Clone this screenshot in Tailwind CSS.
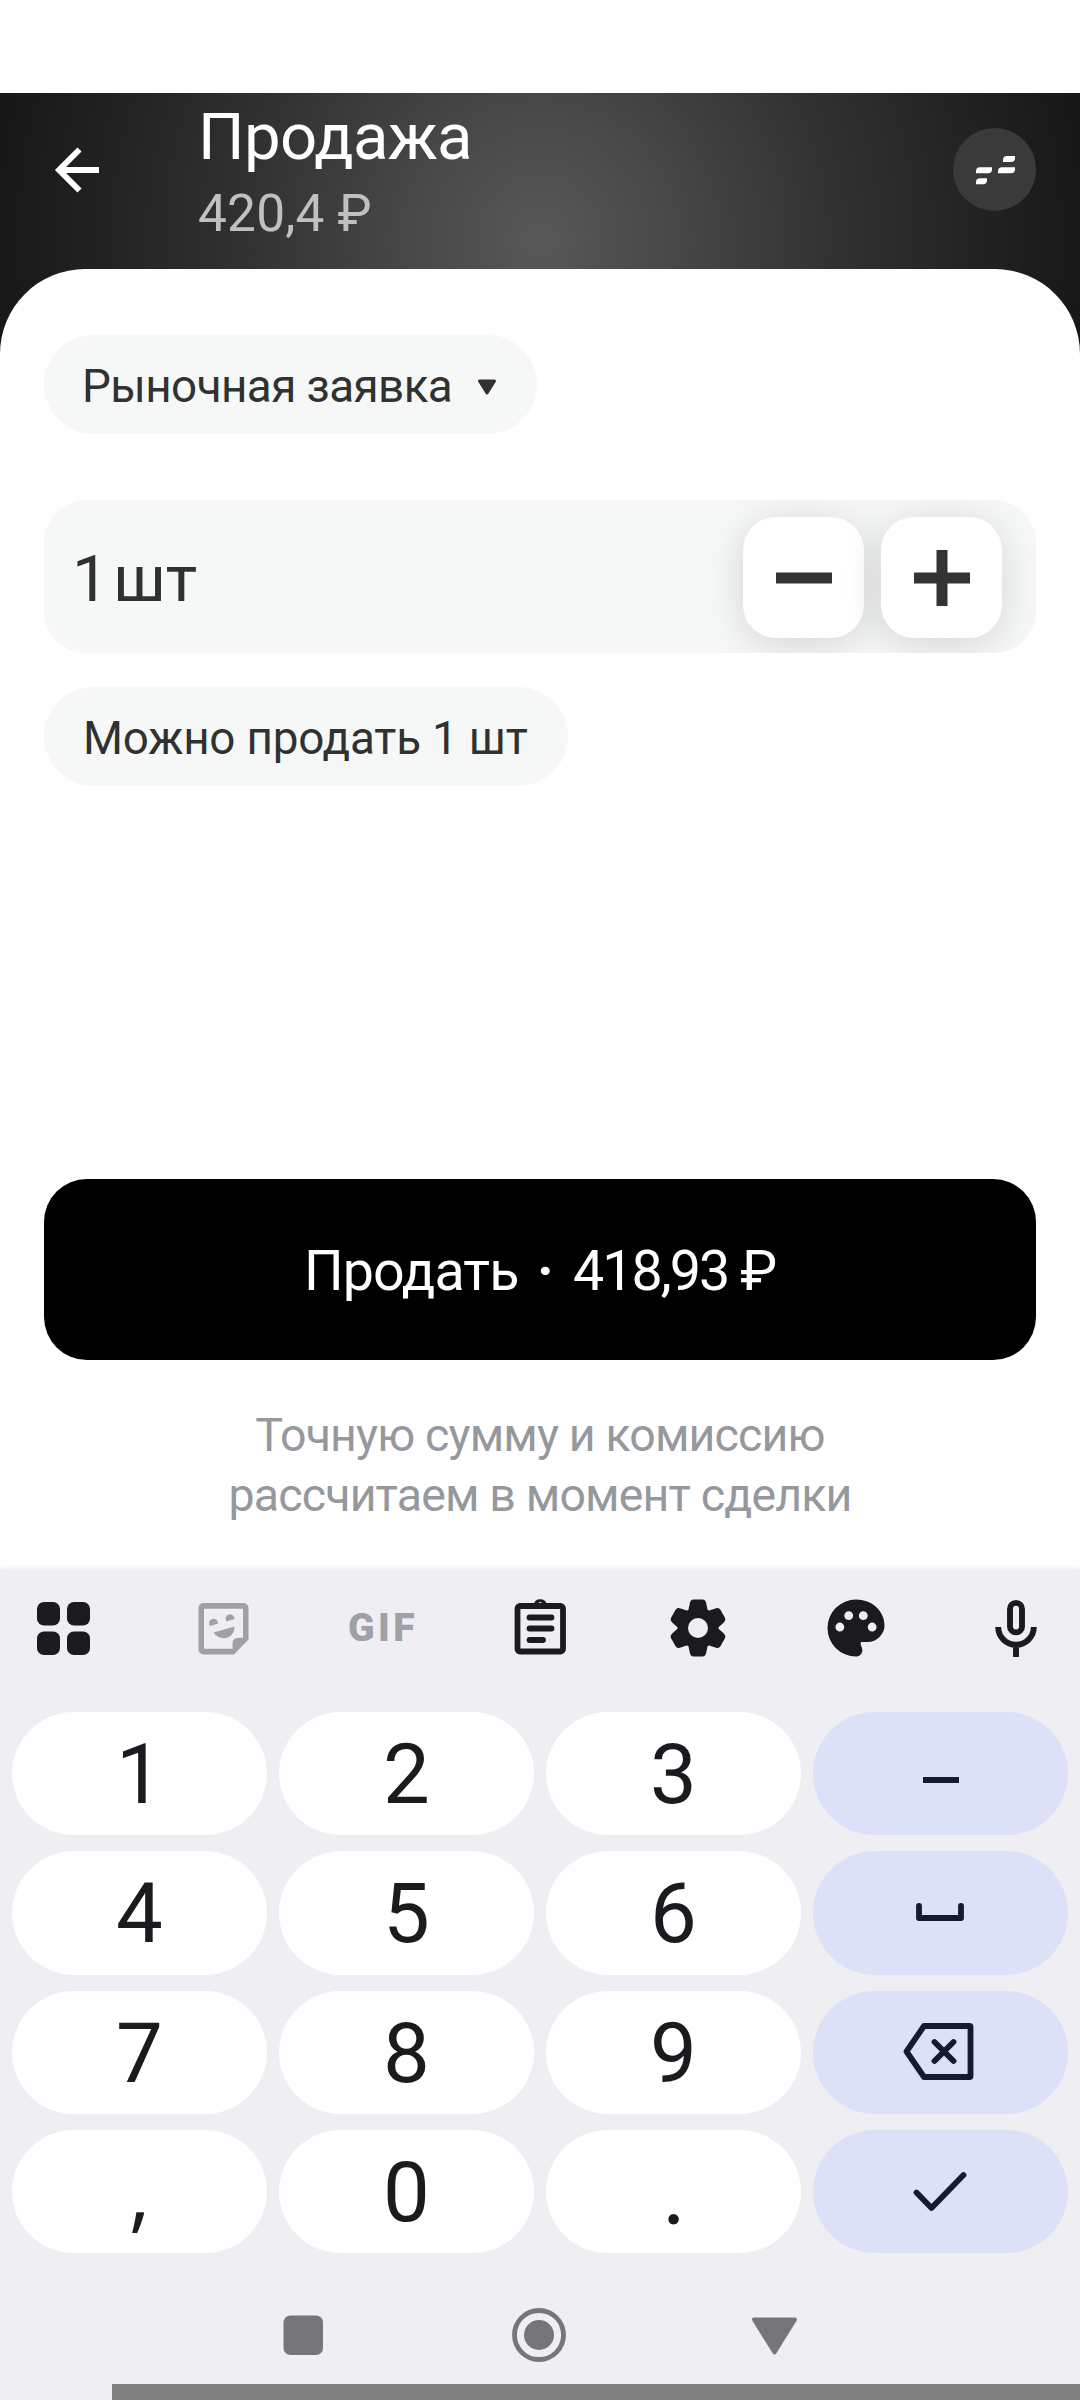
<!DOCTYPE html>
<html lang="ru">
<head>
<meta charset="utf-8">
<title>Продажа</title>
<script src="https://cdn.jsdelivr.net/npm/@tailwindcss/browser@4"></script>
</head>
<body class="w-[1080px] h-[2400px] overflow-hidden bg-white flex flex-col font-['Roboto',sans-serif] text-[#303231] whitespace-nowrap">

<!-- Header and order sheet -->
<main class="mt-[93px] h-[1476px] shrink-0 flex flex-col bg-[radial-gradient(circle_at_540px_145px,#585858_0px,#484848_130px,#323232_290px,#232323_430px,#161616_560px)]">
  <header class="h-[176px] shrink-0 flex items-start">
    <svg class="ml-[52px] mt-[52px] w-[50px] h-[50px]" viewBox="0 0 50 50" fill="none" stroke="#fff" stroke-width="5.8"><path d="M47 25H7M27.500 4.500L7 25l20.500 20.500"/></svg>
    <div class="ml-[96px] mt-[11px] flex-1">
      <h1 class="text-[65.3px] leading-[66px] tracking-[-0.67px] text-white">Продажа</h1>
      <p class="mt-[14px] text-[51.4px] leading-[60px] tracking-[0.2px] text-[#c0c0c0]">420,4 ₽</p>
    </div>
    <div class="mt-[35px] mr-[44px] w-[83px] h-[83px] rounded-full bg-[#3a3a3a]">
      <svg class="w-[83px] h-[83px]" viewBox="0 0 83 83" fill="#fff"><path d="M54 28h8v2q0 4-4 4h-8v-2q0-4 4-4zM27 39.200h12v2q0 4-4 4H23v-2q0-4 4-4zM49 39.200h13v2q0 4-4 4H45v-2q0-4 4-4zM27 50.200h7v2q0 4-4 4h-7v-2q0-4 4-4z"/></svg>
    </div>
  </header>

  <section class="flex-1 bg-white rounded-t-[85px] px-[44px] pt-[66px] flex flex-col items-start">
    <div class="h-[99px] w-[493px] rounded-full bg-[#f6f8f7] flex items-center pl-[38px] pr-[40px] justify-between">
      <span class="pt-[4px] text-[45.8px] leading-[56px] tracking-[-0.58px]">Рыночная заявка</span>
      <svg class="w-[20px] h-[18px] mt-[4px]" viewBox="0 0 20 18" fill="#303231" stroke="#303231" stroke-width="3" stroke-linejoin="round"><path d="M2.500 3h15L10 15z"/></svg>
    </div>

    <div class="mt-[66px] w-full h-[153px] rounded-[42px] bg-[#f6f8f7] overflow-hidden flex items-center pl-[32px] pr-[34px]">
      <div class="flex-1 pt-[4px] flex text-[65.3px] leading-[76px]"><span class="-ml-[4px] w-[41px]">1</span><span>шт</span></div>
      <div class="flex gap-[17px]">
        <button class="w-[121px] h-[121px] rounded-[33px] bg-white shadow-[0_6px_40px_rgba(0,0,0,0.14)] flex items-center justify-center mt-[2px]">
          <svg class="w-[56px] h-[56px]" viewBox="0 0 56 56" fill="#333"><path d="M0 22.500h56v11H0z"/></svg>
        </button>
        <button class="w-[121px] h-[121px] rounded-[33px] bg-white shadow-[0_6px_40px_rgba(0,0,0,0.14)] flex items-center justify-center mt-[2px]">
          <svg class="w-[56px] h-[56px]" viewBox="0 0 56 56" fill="#333"><path d="M0 22.500h56v11H0zM22.500 0h11v56h-11z"/></svg>
        </button>
      </div>
    </div>

    <div class="mt-[34px] h-[99px] w-[524px] rounded-full bg-[#f6f8f7] flex items-center pl-[39px]">
      <span class="pt-[4px] text-[45.8px] leading-[56px] tracking-[-0.19px]">Можно продать 1 шт</span>
    </div>

    <button class="mt-[393px] w-full h-[181px] rounded-[43px] bg-black text-white text-left text-[55.6px] leading-[66px] flex items-center pt-[3px] pl-[260px]">
      <span class="w-[226px] tracking-[-0.93px]">Продать</span>
      <span class="w-[43px] pl-[7px] font-bold">·</span>
      <span class="tracking-[-1.97px]">418,93 ₽</span>
    </button>

    <p class="mt-[45px] w-full text-center text-[46.5px] leading-[60px] tracking-[-0.85px] text-[#95989d]">Точную сумму и комиссию<br>рассчитаем в момент сделки</p>
  </section>
</main>

<!-- Keyboard -->
<section class="relative flex-1 bg-[#eeeef3] shadow-[0_-1px_4px_rgba(0,0,0,0.08)] flex flex-col text-[#1b1b1f]">
  <div class="h-[143px] shrink-0 pt-[21px] pl-[25px] flex gap-[82px] *:shrink-0">
    <svg class="w-[76px] h-[76px]" viewBox="0 0 76 76" fill="#1b1b1f"><rect x="12" y="12" width="23" height="23.500" rx="7"/><rect x="42" y="12" width="23" height="23.500" rx="7"/><rect x="12" y="41.500" width="23" height="23.500" rx="7"/><rect x="42" y="41.500" width="23" height="23.500" rx="7"/></svg>
    <svg class="w-[76px] h-[76px] ml-[2.5px]" viewBox="0 0 76 76" fill="#a0a0a5"><path fill-rule="evenodd" d="M17.500 13h40a5 5 0 0 1 5 5v31.500L48 64.500H17.500a5 5 0 0 1-5-5V18a5 5 0 0 1 5-5zm.5 5.800v40h28.500v-5q0-6 6-6h4.500v-29z"/><path d="M24 36a4.500 4.500 0 1 1 8-2.500zM40.500 31.500a4.500 4.500 0 1 1 8-2.500zM27.500 42.500l21-6c0 13.500-15.500 15-21 6z"/></svg>
    <span class="w-[76px] h-[76px] flex items-center justify-center text-[39px] font-black tracking-[3.500px] pl-[3px] text-[#a0a0a5]">GIF</span>
    <svg class="w-[76px] h-[76px]" viewBox="0 0 76 76" fill="none" stroke="#1b1b1f" stroke-width="5.800"><rect x="15.500" y="16" width="45.500" height="45.500" rx="2.500"/><path stroke-linecap="round" d="M27.500 27.500h22M27.500 38.500h22M27.500 50h13.500"/><path fill="#1b1b1f" stroke="none" fill-rule="evenodd" d="M29 14.500h2.500a7 7 0 0 1 13.500 0h2.500v3H29zM38.200 12a2 2 0 1 0 .1 0z"/></svg>
    <svg class="w-[76px] h-[76px]" viewBox="-38 -38 76 76"><g fill="#1b1b1f"><circle r="20.500"/><g id="tooth"><path d="M-10-16L-8-25.500Q-7.200-28.500-4.500-28.500H4.500Q7.200-28.500 8-25.500L10-16z"/></g><use href="#tooth" transform="rotate(60)"/><use href="#tooth" transform="rotate(120)"/><use href="#tooth" transform="rotate(180)"/><use href="#tooth" transform="rotate(240)"/><use href="#tooth" transform="rotate(300)"/></g><circle r="10" fill="#eeeef3"/></svg>
    <svg class="w-[76px] h-[76px]" viewBox="0 0 24 24" fill="#1b1b1f"><path d="M12 3a9 9 0 0 0 0 18c1.100 0 2-.9 2-2 0-1-.55-1.300-.55-2.200 0-.3.2-.4.550-.4h1.700a5.300 5.300 0 0 0 5.300-5.300C21 6.600 17 3 12 3zM6.900 13.100a1.400 1.400 0 1 1 0-2.800 1.400 1.400 0 0 1 0 2.800zm2.800-3.600a1.400 1.400 0 1 1 0-2.800 1.400 1.400 0 0 1 0 2.800zm4.600 0a1.400 1.400 0 1 1 0-2.800 1.400 1.400 0 0 1 0 2.800zm2.800 3.600a1.400 1.400 0 1 1 0-2.800 1.400 1.400 0 0 1 0 2.800z"/></svg>
    <svg class="w-[76px] h-[76px] ml-[2.5px]" viewBox="0 0 76 76" fill="none" stroke="#1b1b1f" stroke-width="5.900"><rect x="32" y="12.900" width="12" height="29.500" rx="6"/><path d="M20.200 37a17.800 17.800 0 0 0 35.600 0M38 54v13"/></svg>
  </div>

  <div class="grid grid-cols-4 grid-rows-4 gap-x-[12px] gap-y-[16px] px-[12px] h-[541px] shrink-0 text-[83.300px] *:rounded-[62px] *:flex *:items-center *:justify-center *:leading-[100px]">
    <div class="bg-white pt-[3px]">1</div>
    <div class="bg-white pt-[3px]">2</div>
    <div class="bg-white pt-[3px]">3</div>
    <div class="bg-[#dde1f8] pr-[1px]"><svg class="w-[76px] h-[76px]" viewBox="0 0 76 76" fill="#141a30"><path d="M21 41h36v6h-36z"/></svg></div>
    <div class="bg-white pt-[3px]">4</div>
    <div class="bg-white pt-[3px]">5</div>
    <div class="bg-white pt-[3px]">6</div>
    <div class="bg-[#dde1f8] pr-[1px]"><svg class="w-[76px] h-[76px]" viewBox="0 0 76 76" fill="none" stroke="#141a30" stroke-width="5.800" stroke-linecap="round" stroke-linejoin="round"><path d="M17 31v12h42v-12"/></svg></div>
    <div class="bg-white pt-[3px]">7</div>
    <div class="bg-white pt-[3px]">8</div>
    <div class="bg-white pt-[3px]">9</div>
    <div class="bg-[#dde1f8] pr-[1px]"><svg class="w-[76px] h-[76px]" viewBox="0 0 76 76" fill="none" stroke="#141a30" stroke-width="5.800" stroke-linecap="round" stroke-linejoin="round"><path d="M4.500 37.500L22 12h45.500q1 0 1 1v49q0 1-1 1H22zM32.500 28l19 19M51.500 28l-19 19"/></svg></div>
    <div class="bg-white pb-[2px] font-['Open_Sans',sans-serif]">,</div>
    <div class="bg-white pt-[3px]">0</div>
    <div class="bg-white pt-[1px] font-['Lato',sans-serif]">.</div>
    <div class="bg-[#dde1f8] pr-[1px]"><svg class="w-[76px] h-[76px]" viewBox="0 0 76 76" fill="none" stroke="#141a30" stroke-width="5.800" stroke-linecap="round" stroke-linejoin="round"><path d="M14.500 39.500L29.500 55L61.500 22"/></svg></div>
  </div>

  <!-- System navigation -->
  <nav class="flex-1 flex pt-[52px] pl-[273px] gap-[175.500px]">
    <svg class="w-[60px] h-[60px]" viewBox="0 0 60 60" fill="#767679"><rect x="10.500" y="10.500" width="39.500" height="39.500" rx="7"/></svg>
    <svg class="w-[60px] h-[60px]" viewBox="0 0 60 60" fill="#767679"><circle cx="30" cy="30" r="24.500" fill="none" stroke="#767679" stroke-width="4.800"/><circle cx="30" cy="30" r="15"/></svg>
    <svg class="w-[60px] h-[60px]" viewBox="0 0 60 60" fill="#767679" stroke="#767679" stroke-width="4" stroke-linejoin="round"><path d="M10 14.500h41L30.500 47.500z"/></svg>
  </nav>
  <div class="h-[16px] ml-[112px] bg-[#808080]"></div>
</section>
</body>
</html>
